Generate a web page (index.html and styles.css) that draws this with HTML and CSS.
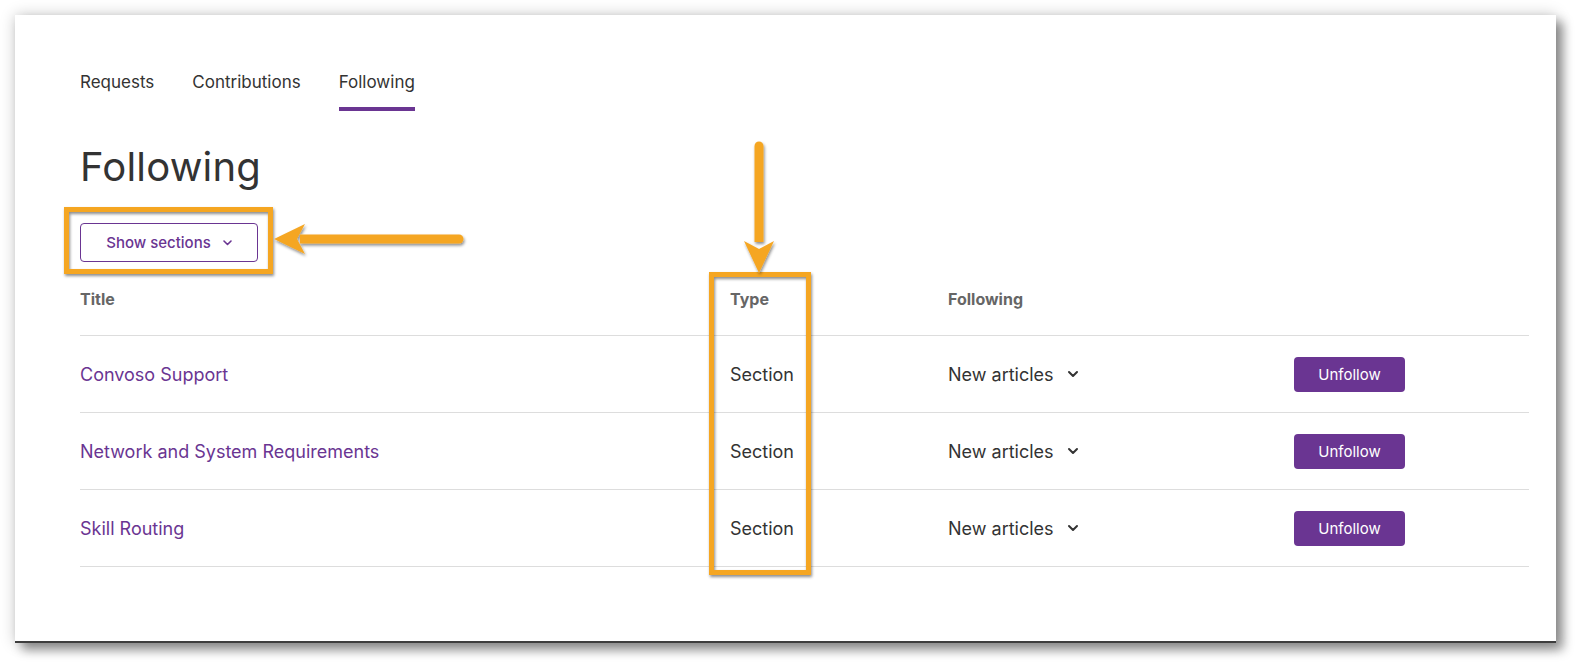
FILE: index.html
```html
<!DOCTYPE html>
<html lang="en">
  <head>
    <meta charset="utf-8" />
    <title>Following</title>
    <link rel="stylesheet" href="styles.css">
  </head>
  <body>
    <div class="card">
      <!-- Profile tabs -->
      <nav class="tabs">
        <a class="tab" href="#">Requests</a>
        <a class="tab" href="#">Contributions</a>
        <a class="tab active" href="#">Following</a>
      </nav>

      <h1 class="page-title">Following</h1>

      <button class="sections-btn">
        Show sections
        <svg width="9" height="6" viewBox="0 0 9 6"><path d="M1 1l3.5 3.5L8 1" fill="none" stroke="currentColor" stroke-width="1.6" stroke-linecap="round" stroke-linejoin="round"/></svg>
      </button>

      <div class="table">
        <div class="row head">
          <div>Title</div>
          <div>Type</div>
          <div>Following</div>
          <div></div>
        </div>
        <div class="row">
          <a class="title-link" href="#">Convoso Support</a>
          <div class="type">Section</div>
          <div class="follow-select">New articles
            <svg width="12" height="8" viewBox="0 0 12 8"><path d="M2 2l4 4 4-4" fill="none" stroke="currentColor" stroke-width="2" stroke-linecap="round" stroke-linejoin="round"/></svg>
          </div>
          <div><button class="unfollow-btn">Unfollow</button></div>
        </div>
        <div class="row">
          <a class="title-link" href="#">Network and System Requirements</a>
          <div class="type">Section</div>
          <div class="follow-select">New articles
            <svg width="12" height="8" viewBox="0 0 12 8"><path d="M2 2l4 4 4-4" fill="none" stroke="currentColor" stroke-width="2" stroke-linecap="round" stroke-linejoin="round"/></svg>
          </div>
          <div><button class="unfollow-btn">Unfollow</button></div>
        </div>
        <div class="row">
          <a class="title-link" href="#">Skill Routing</a>
          <div class="type">Section</div>
          <div class="follow-select">New articles
            <svg width="12" height="8" viewBox="0 0 12 8"><path d="M2 2l4 4 4-4" fill="none" stroke="currentColor" stroke-width="2" stroke-linecap="round" stroke-linejoin="round"/></svg>
          </div>
          <div><button class="unfollow-btn">Unfollow</button></div>
        </div>
      </div>
    </div>

    <!-- Annotation overlay: highlight boxes and arrows -->
    <svg class="annotations" width="1581" height="669" viewBox="0 0 1581 669">
      <defs>
        <filter id="drop" x="-20%" y="-20%" width="140%" height="140%">
          <feDropShadow dx="1" dy="2" stdDeviation="1.5" flood-color="#000" flood-opacity="0.45"/>
        </filter>
      </defs>
      <g filter="url(#drop)" fill="none" stroke="#f5a623" stroke-width="5">
        <rect x="66.5" y="209.5" width="204" height="62"/>
        <rect x="711.5" y="274.5" width="97" height="298"/>
      </g>
      <g filter="url(#drop)" fill="#f5a623">
        <path d="M459 234.5H300v9h159a4.5 4.5 0 0 0 0-9z"/>
        <path d="M274 239l31-15-8 15 8 15z"/>
        <path d="M754.5 146v96h9v-96a4.5 4.5 0 0 0-9 0z"/>
        <path d="M759 273l-15-32 15 8 15-8z"/>
      </g>
    </svg>
  </body>
</html>
```

FILE: styles.css
```css
* {
  margin: 0;
  padding: 0;
  box-sizing: border-box;
}

body {
  font-family: 'Inter', 'Liberation Sans', sans-serif;
  -webkit-font-smoothing: antialiased;
  background: #fff;
  color: #333;
  width: 1581px;
  height: 669px;
  overflow: hidden;
  position: relative;
}

.card {
  margin: 15px 0 0 15px;
  width: 1541px;
  height: 628px;
  background: #fff;
  border-bottom: 2px solid #3d3d3d;
  box-shadow: 0 0 14px rgba(0, 0, 0, 0.22), 7px 7px 10px rgba(0, 0, 0, 0.4);
  padding: 55px 27px 0 65px;
}

/* Tabs */
.tabs {
  display: flex;
  gap: 38px;
}

.tab {
  font-size: 17px;
  line-height: 24px;
  color: #333;
  text-decoration: none;
  padding-bottom: 13px;
  border-bottom: 4px solid transparent;
}

.tab.active {
  border-bottom-color: #6a3592;
}

.page-title {
  margin-top: 32px;
  font-size: 40px;
  line-height: 48px;
  font-weight: 400;
  color: #333;
  letter-spacing: 0.2px;
}

.sections-btn {
  margin-top: 32px;
  width: 178px;
  height: 39px;
  display: flex;
  align-items: center;
  justify-content: center;
  gap: 12px;
  background: #fff;
  border: 1px solid #6a3592;
  border-radius: 4px;
  color: #6a3592;
  font-family: inherit;
  font-size: 15px;
  font-weight: 500;
  cursor: pointer;
}

/* Following table */
.table {
  margin-top: 27px;
}

.row {
  display: grid;
  grid-template-columns: 650px 218px 346px 1fr;
  align-items: center;
  height: 77px;
  border-bottom: 1px solid #ddd;
}

.row.head {
  height: 47px;
  align-items: start;
  font-size: 16px;
  line-height: 20px;
  font-weight: 700;
  color: #666;
}

.title-link {
  font-size: 18px;
  color: #6a3592;
  text-decoration: none;
}

.type {
  font-size: 18px;
  color: #333;
}

.follow-select {
  display: flex;
  align-items: center;
  gap: 13px;
  font-size: 18px;
  color: #333;
}

.unfollow-btn {
  width: 111px;
  height: 35px;
  background: #6a3592;
  color: #fff;
  border: none;
  border-radius: 4px;
  font-family: inherit;
  font-size: 15px;
  cursor: pointer;
}

.annotations {
  position: absolute;
  left: 0;
  top: 0;
  pointer-events: none;
}
```
